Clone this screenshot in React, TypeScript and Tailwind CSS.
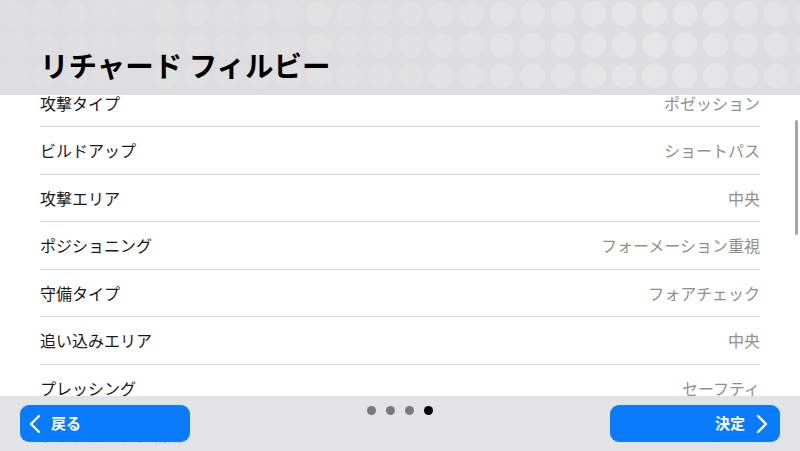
import React from "react";

const rows: [string, string][] = [
  ["攻撃タイプ", "ポゼッション"],
  ["ビルドアップ", "ショートパス"],
  ["攻撃エリア", "中央"],
  ["ポジショニング", "フォーメーション重視"],
  ["守備タイプ", "フォアチェック"],
  ["追い込みエリア", "中央"],
  ["プレッシング", "セーフティ"],
  ["ディフェンシブ戦術", "ゾーン"],
];

const font = { fontFamily: '"Noto Sans CJK JP", "Noto Sans", sans-serif' };

function Chevron({ dir }: { dir: "left" | "right" }) {
  return (
    <svg width="12" height="20" viewBox="0 0 12 20" fill="none">
      <path
        d={dir === "left" ? "M10 2 L2 10 L10 18" : "M2 2 L10 10 L2 18"}
        stroke="white"
        strokeWidth="2.4"
        strokeLinecap="round"
        strokeLinejoin="round"
      />
    </svg>
  );
}

export default function App() {
  return (
    <div className="relative w-[800px] h-[451px] overflow-hidden bg-white flex flex-col" style={font}>
      {/* header */}
      <div className="relative h-[95px] shrink-0 bg-[#dddddf] z-10">
        <svg className="absolute inset-0" width="800" height="95">
          <defs>
            <pattern id="dots" x="-1.25" y="-1.5" width="30.5" height="31" patternUnits="userSpaceOnUse">
              <circle cx="15.25" cy="15.5" r="12.5" fill="#e8e8ea" />
            </pattern>
            <linearGradient id="fade" x1="0" x2="1" y1="0" y2="0">
              <stop offset="0" stopColor="white" stopOpacity="0.2" />
              <stop offset="0.5" stopColor="white" stopOpacity="0.35" />
              <stop offset="0.85" stopColor="white" stopOpacity="0.8" />
              <stop offset="1" stopColor="white" stopOpacity="0.45" />
            </linearGradient>
            <mask id="m">
              <rect width="800" height="95" fill="url(#fade)" />
            </mask>
          </defs>
          <rect width="800" height="95" fill="url(#dots)" mask="url(#m)" />
        </svg>
        <div className="relative pl-[40px] pt-[45px] text-[28.5px] leading-[40px] font-bold text-black">
          リチャード フィルビー
        </div>
      </div>

      {/* list */}
      <div className="flex-1 overflow-hidden">
        <div className="mt-[-15.5px] px-[40px]">
          {rows.map(([k, v]) => (
            <div
              key={k}
              className="box-border h-[47.5px] border-b border-[#d9d9d9] flex items-center justify-between text-[16px]"
            >
              <span className="text-[#1a1a1a]">{k}</span>
              <span className="text-[#8f8f8f]">{v}</span>
            </div>
          ))}
        </div>
      </div>

      {/* scrollbar */}
      <div className="absolute left-[795px] top-[120px] w-[3px] h-[115px] rounded-full bg-[#a6a6a6]" />

      {/* bottom bar */}
      <div className="absolute left-0 right-0 bottom-0 h-[55px] bg-[#dfdfe1]/[0.88] flex items-start justify-between px-[20px] pt-[9px]">
        <button className="w-[170px] h-[37px] rounded-[9px] bg-[#0a7bfe] flex items-center pl-[9px] gap-[10px] text-white font-bold text-[15px]">
          <Chevron dir="left" />
          <span>戻る</span>
        </button>
        <div className="flex gap-[10px] mt-[1px]">
          <span className="w-[9px] h-[9px] rounded-full bg-[#7b7b7b]" />
          <span className="w-[9px] h-[9px] rounded-full bg-[#7b7b7b]" />
          <span className="w-[9px] h-[9px] rounded-full bg-[#7b7b7b]" />
          <span className="w-[9px] h-[9px] rounded-full bg-black" />
        </div>
        <button className="w-[170px] h-[37px] rounded-[9px] bg-[#0a7bfe] flex items-center justify-end pr-[12px] gap-[11px] text-white font-bold text-[15px]">
          <span>決定</span>
          <Chevron dir="right" />
        </button>
      </div>
    </div>
  );
}
